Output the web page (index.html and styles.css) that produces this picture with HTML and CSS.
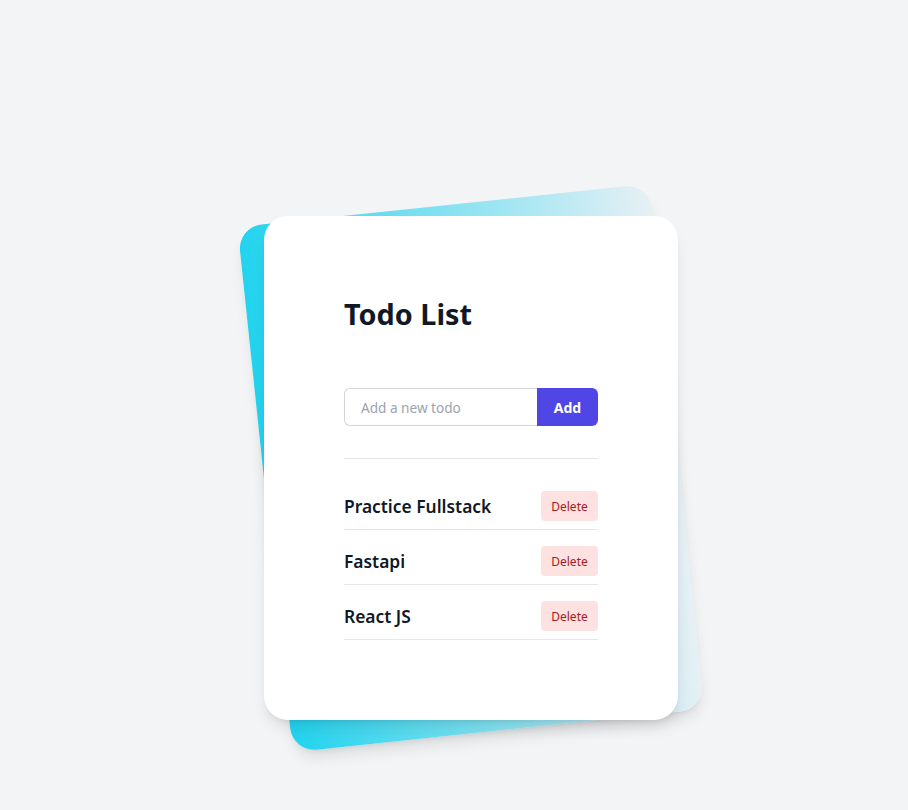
FILE: index.html
```
<!DOCTYPE html>
<html lang="en">
<head>
<meta charset="utf-8">
<title>Todo List</title>
<link rel="stylesheet" href="styles.css">
</head>
<body>
<main class="page">
  <div class="stack">
    <div class="backdrop"></div>
    <section class="card">
      <h1 class="title">Todo List</h1>
      <form class="add-form">
        <input class="add-input" type="text" placeholder="Add a new todo">
        <button class="add-btn" type="button">Add</button>
      </form>
      <hr class="divider">
      <ul class="todos">
        <li class="todo"><span class="todo-text">Practice Fullstack</span><button class="del-btn" type="button">Delete</button></li>
        <li class="todo"><span class="todo-text">Fastapi</span><button class="del-btn" type="button">Delete</button></li>
        <li class="todo"><span class="todo-text">React JS</span><button class="del-btn" type="button">Delete</button></li>
      </ul>
    </section>
  </div>
</main>
</body>
</html>
```
FILE: styles.css
```
* { box-sizing: border-box; }
html, body { margin: 0; padding: 0; }
body {
  background: #f3f4f6;
  font-family: "Noto Sans", "Open Sans", sans-serif;
  color: #111827;
}
.page {
  min-height: 810px;
  padding: 204px 0 0 264px;
}
.stack {
  position: relative;
  width: 414px;
  padding: 12px 0;
}
.backdrop {
  position: absolute;
  inset: 0;
  border-radius: 24px;
  background: linear-gradient(to right, #22d3ee, #e6f0f4);
  transform: rotate(-6deg);
  box-shadow: 0 10px 15px -3px rgba(0,0,0,0.1), 0 4px 6px -4px rgba(0,0,0,0.1);
}
.card {
  position: relative;
  background: #fff;
  border-radius: 24px;
  padding: 80px;
  box-shadow: 0 10px 15px -3px rgba(0,0,0,0.1), 0 4px 6px -4px rgba(0,0,0,0.1);
}
.title {
  margin: 0 0 56px;
  font-size: 28.8px;
  line-height: 36px;
  font-weight: 700;
  color: #111827;
}
.add-form {
  display: flex;
  height: 38px;
  margin: 0;
}
.add-input {
  flex: 1;
  min-width: 0;
  border: 1px solid #d1d5db;
  border-right: none;
  border-radius: 6px 0 0 6px;
  padding: 0 16px;
  font: 13.6px "Noto Sans", sans-serif;
  color: #111827;
  outline: none;
}
.add-input::placeholder { color: #9ca3af; }
.add-btn {
  width: 61px;
  border: none;
  border-radius: 0 6px 6px 0;
  background: #4f46e5;
  color: #fff;
  font: 700 14px "Noto Sans", sans-serif;
  padding: 0;
}
.divider {
  margin: 32px 0 24px;
  border: none;
  border-top: 1px solid #e5e7eb;
  height: 0;
}
.todos {
  list-style: none;
  margin: 0;
  padding: 0;
  display: flex;
  flex-direction: column;
  gap: 8px;
}
.todo {
  display: flex;
  justify-content: space-between;
  align-items: center;
  padding: 8px 0;
  border-bottom: 1px solid #e5e7eb;
}
.todo-text {
  font-size: 17.4px;
  font-weight: 600;
  color: #111827;
}
.del-btn {
  height: 30px;
  width: 57px;
  padding: 0;
  border: none;
  border-radius: 4px;
  background: #fee2e2;
  color: #a61b1b;
  font: 12px "Noto Sans", sans-serif;
}
```
